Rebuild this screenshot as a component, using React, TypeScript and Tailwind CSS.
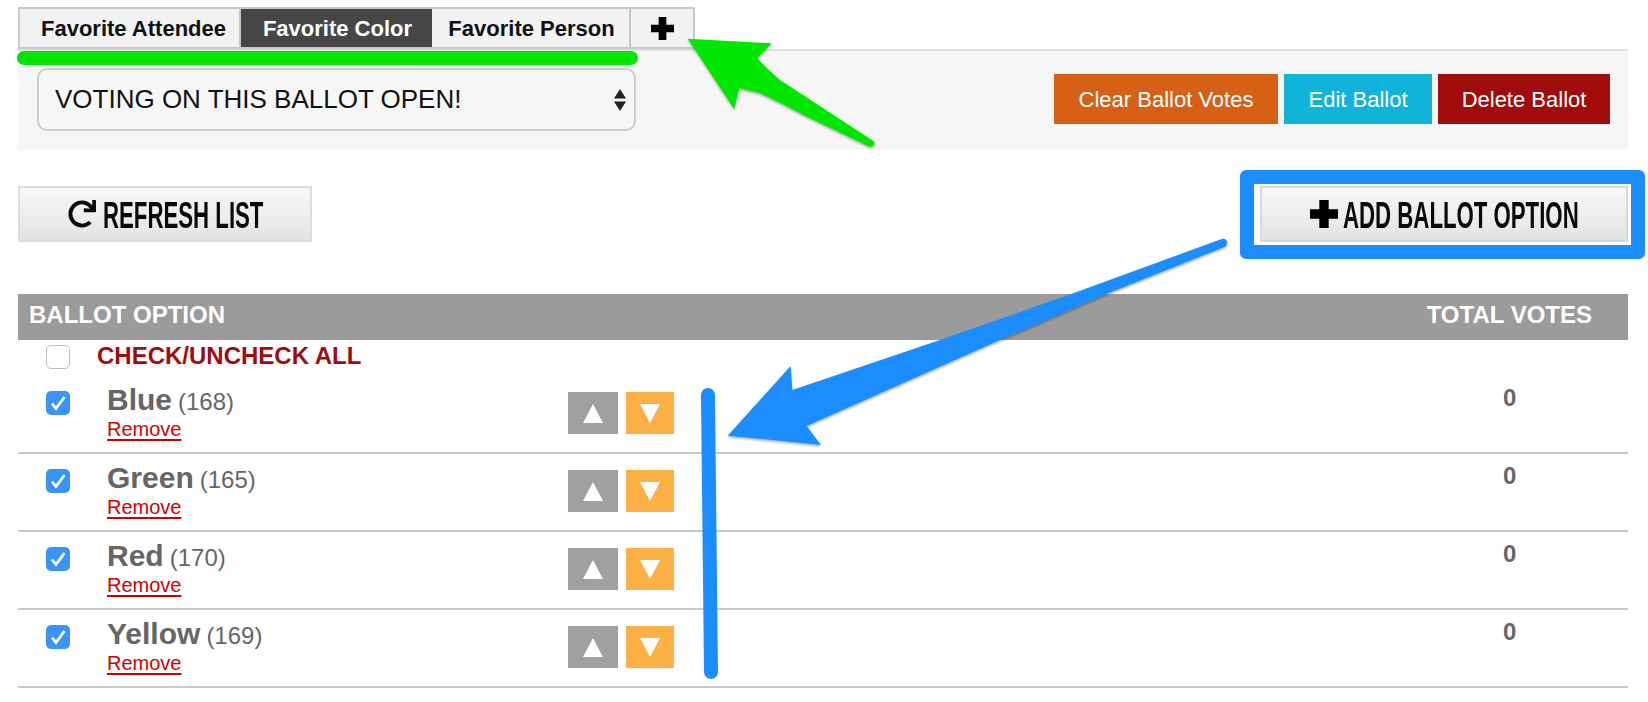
import React from "react";
import { FaRedo } from "react-icons/fa";

function Plus({ className }: { className: string }) {
  return (
    <svg viewBox="0 0 24 24" className={className} fill="currentColor">
      <path d="M8 0h8v8h8v8h-8v8H8v-8H0V8h8z" />
    </svg>
  );
}

function Condensed({ children }: { children: React.ReactNode }) {
  return (
    <span className="mt-[3px] inline-block w-0 whitespace-nowrap text-[36px] font-bold leading-none origin-left scale-x-[0.617]">
      {children}
    </span>
  );
}

const rows = [
  { name: "Blue", count: "(168)" },
  { name: "Green", count: "(165)" },
  { name: "Red", count: "(170)" },
  { name: "Yellow", count: "(169)" },
];

export default function App() {
  return (
    <div className="relative h-[702px] w-[1648px] overflow-hidden bg-white pl-[18px] pr-[20px] pt-[7px] [font-family:'Liberation_Sans',Arial,sans-serif]">
      {/* tabs */}
      <div className="flex h-[42px] text-[22px] font-bold text-[#111]">
        <div className="flex w-[223px] items-center justify-center border-2 border-[#c8c8c8] bg-[#f2f2f2] pl-[8px]">Favorite Attendee</div>
        <div className="flex w-[191px] items-center justify-center border-y-2 border-[#c8c8c8] bg-[#464646] pl-[2px] text-white">Favorite Color</div>
        <div className="flex w-[197px] items-center justify-center border-y-2 border-[#c8c8c8] bg-[#f2f2f2] pl-[2px]">Favorite Person</div>
        <div className="flex w-[66px] items-center justify-center border-2 border-[#c8c8c8] bg-[#f2f2f2]">
          <Plus className="h-[23px] w-[23px] text-black" />
        </div>
      </div>

      {/* ballot panel */}
      <div className="flex h-[101px] items-start justify-between border-t-2 border-[#dedede] bg-[#f6f6f6] pl-[19px] pr-[18px]">
        <div className="mt-[17px] flex h-[63px] w-[599px] items-center justify-between rounded-[10px] border-2 border-[#cccccc] bg-[#f6f6f6] pl-[16px] pr-[8px] text-[26px] text-[#111]">
          <span>VOTING ON THIS BALLOT OPEN!</span>
          <svg viewBox="0 0 12 22" className="h-[22px] w-[12px]" fill="#222">
            <path d="M6 0l6 9.500H0zM6 22L0 12.500h12z" />
          </svg>
        </div>
        <div className="mt-[23px] flex gap-[6px] text-[22px] text-white">
          <div className="flex h-[50px] w-[224px] items-center justify-center bg-[#d66016]">Clear Ballot Votes</div>
          <div className="flex h-[50px] w-[148px] items-center justify-center bg-[#11b3da]">Edit Ballot</div>
          <div className="flex h-[50px] w-[172px] items-center justify-center bg-[#a00c0c]">Delete Ballot</div>
        </div>
      </div>

      {/* action buttons */}
      <div className="mt-[36px] flex h-[56px] justify-between">
        <div className="flex w-[294px] items-center border-2 border-[#dcdcdc] bg-gradient-to-b from-[#f8f8f8] to-[#e3e3e3] pl-[48px] text-[#0a0a0a]">
          <FaRedo className="mr-[7px] h-[28px] w-[28px] blur-[0.5px]" />
          <Condensed>REFRESH LIST</Condensed>
        </div>
        <div className="flex w-[368px] items-center border-2 border-[#d8d8d8] bg-gradient-to-b from-[#f8f8f8] to-[#e3e3e3] pl-[48px] text-[#0a0a0a]">
          <Plus className="mr-[5px] h-[28px] w-[28px] text-black" />
          <Condensed>ADD BALLOT OPTION</Condensed>
        </div>
      </div>

      {/* table */}
      <div className="mt-[52px]">
        <div className="flex h-[46px] items-center justify-between bg-[#9b9b9b] pb-[4px] pl-[11px] pr-[36px] text-[24px] font-bold text-white">
          <span>BALLOT OPTION</span>
          <span>TOTAL VOTES</span>
        </div>
        <div className="flex h-[36px] items-start pl-[28px] pt-[5px]">
          <div className="h-[24px] w-[24px] rounded-[5px] border border-[#bdbdbd] bg-white" />
          <span className="ml-[27px] text-[24px] font-bold leading-[22px] text-[#a00c0c]">CHECK/UNCHECK ALL</span>
        </div>
        {rows.map((r) => (
          <div key={r.name} className="flex h-[78px] items-start border-b-2 border-[#c8c8c8] pl-[28px]">
            <div className="mt-[15px] flex h-[24px] w-[24px] items-center justify-center rounded-[5px] bg-[#3a94f8]">
              <svg viewBox="0 0 24 24" className="h-[24px] w-[24px]" fill="none" stroke="white" strokeWidth="2.800">
                <path d="M6 12.500l4 5L18.500 6" />
              </svg>
            </div>
            <div className="ml-[37px] w-[461px] pt-[5px] text-[#666]">
              <div className="flex h-[37px] items-baseline whitespace-nowrap leading-[38px]">
                <span className="text-[30px] font-bold">{r.name}</span>
                <span className="ml-[6px] text-[24px]">{r.count}</span>
              </div>
              <a className="block text-[20px] leading-[22px] text-[#d00000] underline decoration-2 underline-offset-[3px]">Remove</a>
            </div>
            <div className="mt-[16px] flex h-[42px] w-[50px] items-center justify-center bg-[#a0a0a0]">
              <svg viewBox="0 0 20 19" className="h-[19px] w-[20px]" fill="white">
                <path d="M10 0l10 19H0z" />
              </svg>
            </div>
            <div className="ml-[8px] mt-[16px] flex h-[42px] w-[48px] items-center justify-center bg-[#fdb045]">
              <svg viewBox="0 0 20 19" className="h-[19px] w-[20px]" fill="white">
                <path d="M0 0h20L10 19z" />
              </svg>
            </div>
            <div className="ml-[829px] mt-[9px] text-[24px] font-bold leading-[26px] text-[#666]">0</div>
          </div>
        ))}
      </div>

      {/* annotations drawn on top of the page */}
      <div className="absolute left-[17px] top-[51px] h-[14px] w-[621px] rounded-[7px] bg-[#00e600]" />
      <div className="pointer-events-none absolute left-[1240px] top-[170px] h-[89px] w-[405px] rounded-[6px] border-[14px] border-[#1b8dff]" />
      <svg className="pointer-events-none absolute left-0 top-0 h-[702px] w-[1648px]" viewBox="0 0 1648 702">
        <defs>
          <filter id="s" x="-5%" y="-5%" width="110%" height="110%">
            <feDropShadow dx="0" dy="1.500" stdDeviation="1.200" floodColor="#000" floodOpacity="0.35" />
          </filter>
        </defs>
        <path
          filter="url(#s)"
          fill="#00e600"
          d="M687.700 38.700L771.700 43.300L757.300 58.300Q766 68 780 80L873.300 141Q876 144 873 146Q871 147.500 868 146L803.300 115Q775 100 760 93.300L739.300 88.300L734.300 109.300Z"
        />
        <path
          filter="url(#s)"
          fill="#1b8dff"
          d="M727.700 435.700L790.700 366L792.300 390L940 340L1073.300 293.300L1221.700 239Q1226 238 1227 241.700Q1227.500 245 1225 246.700L1108.300 293.300L1000 340L806.700 426L821 445Z"
        />
        <line x1="708" y1="395" x2="711" y2="672" stroke="#1b8dff" strokeWidth="14" strokeLinecap="round" />
      </svg>
    </div>
  );
}
